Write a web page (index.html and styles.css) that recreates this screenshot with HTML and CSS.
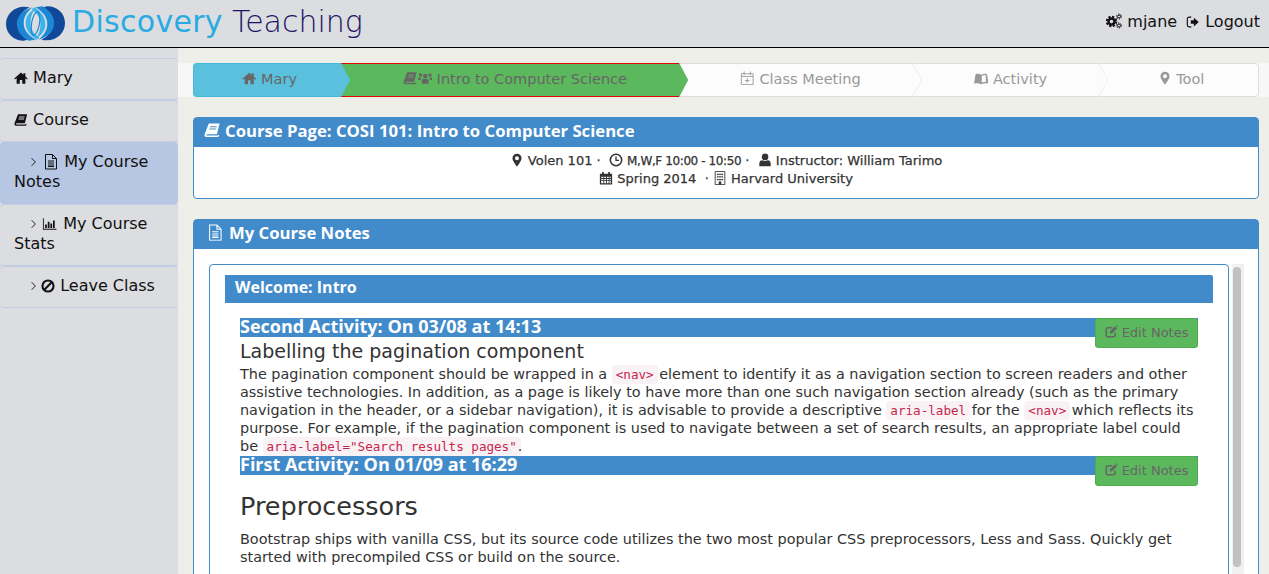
FILE: index.html
```html
<!DOCTYPE html>
<html lang="en">
<head>
    <meta charset="UTF-8">
    <meta name="viewport" content="width=device-width, initial-scale=1.0">
    <title>Discovery Teaching</title>
    <link rel="stylesheet" href="styles.css">
</head>
<body>
    <svg class="icon-defs" aria-hidden="true">
        <symbol id="i-home" viewBox="0 0 16 16"><path d="M8 1.800 .3 8.600l.9 1L3 8v6.500h3.600v-4.200h2.800v4.200H13V8l1.800 1.600.9-1L13 6.200V2.500h-2.200v1.800L8 1.800z"/></symbol>
        <symbol id="i-book" viewBox="0 0 16 16"><path fill-rule="evenodd" d="M4.600 1.500H15l-2.600 10.300H3.300c-1 0-1.300.9-.7 1.200h10.600l.7-.7.700.3-1 1.900H2.300C.7 14.500.2 13 .7 11.500zM6 4h6.200l-.2 1H5.700zM5.300 6.300h6.200l-.2 1H5z"/></symbol>
        <symbol id="i-file" viewBox="0 0 16 16"><path fill="none" stroke="currentColor" d="M2.500 1h7l4 4v10.500h-11zM9.500 1v4h4M5 7.500h6M5 9.500h6M5 11.500h6M5 13h6"/></symbol>
        <symbol id="i-chart" viewBox="0 0 16 16"><path d="M.5 1.500h1v12h14.500v1H.5zM3 8.500h2v4H3zM6 5.500h2v7H6zM9 7.500h2v5H9zM12 4h2v8.500h-2z"/></symbol>
        <symbol id="i-ban" viewBox="0 0 16 16"><circle cx="8" cy="8" r="6.300" fill="none" stroke="currentColor" stroke-width="2.400"/><path d="m3.500 12.500 9-9" stroke="currentColor" stroke-width="2.400"/></symbol>
        <symbol id="i-group" viewBox="0 0 16 16"><circle cx="8" cy="5.500" r="2.600"/><circle cx="2.800" cy="4.500" r="1.900"/><circle cx="13.200" cy="4.500" r="1.900"/><path d="M4.300 14V10.500C4.300 9 5.500 8.500 8 8.500s3.700.5 3.700 2V14zM0 10V8.500C0 7.300 1 7 3.600 7.200 3.200 8 3 9 3 10zM16 10V8.500c0-1.200-1-1.500-3.600-1.300.4.800.6 1.800.6 2.800z"/></symbol>
        <symbol id="i-calplus" viewBox="0 0 16 16"><path fill="none" stroke="currentColor" d="M1.500 3h13v12h-13zM1.500 6h13M4.500 .5v4M11.500 .5v4M8 8v5M5.500 10.500h5"/></symbol>
        <symbol id="i-open" viewBox="0 0 16 16"><path d="M2.500 3c2.200 0 4.300.3 5.500 1.300C9.200 3.300 11.300 3 13.500 3l1 1.500 1.500 9.500c-2.500-.6-5-.6-8 .5-3-1.100-5.500-1.100-8-.5L1.500 4.500zM8.600 5.500v7.300c1.500-.7 3-.9 4.800-.8l-.7-7.500c-1.800 0-3.100.2-4.100 1z" fill-rule="evenodd"/></symbol>
        <symbol id="i-marker" viewBox="0 0 16 16"><path fill-rule="evenodd" d="M8 .8a5.200 5.200 0 0 0-5.200 5.200c0 3.200 5.200 9.500 5.200 9.500s5.200-6.300 5.200-9.500A5.200 5.200 0 0 0 8 .8zm0 3a2.300 2.300 0 1 1 0 4.600 2.300 2.300 0 0 1 0-4.600z"/></symbol>
        <symbol id="i-clock" viewBox="0 0 16 16"><circle cx="8" cy="8" r="6.500" fill="none" stroke="currentColor" stroke-width="1.800"/><path d="M8 4v4.500h3.500" fill="none" stroke="currentColor" stroke-width="1.500"/></symbol>
        <symbol id="i-user" viewBox="0 0 16 16"><circle cx="8" cy="4.500" r="3.800"/><path d="M1.500 15v-3c0-2.500 1.500-3.800 3.500-3.800 1.800 1.200 4.200 1.200 6 0 2 0 3.500 1.300 3.500 3.800v3z"/></symbol>
        <symbol id="i-cal" viewBox="0 0 16 16"><path fill-rule="evenodd" d="M1 3h2.500V1h2v2h5V1h2v2H15v12.500H1zM2.500 6.500v1.500h2.500V6.500zM6 6.500v1.500h2V6.500zM9 6.500v1.500h2V6.500zM12 6.500v1.500h1.500V6.500zM2.500 9v1.500h2.500V9zM6 9v1.500h2V9zM9 9v1.500h2V9zM12 9v1.500h1.500V9zM2.500 11.500v2.500h2.500v-2.500zM6 11.500v2.500h2v-2.500zM9 11.500v2.500h2v-2.500zM12 11.500v2.500h1.500v-2.500z"/></symbol>
        <symbol id="i-building" viewBox="0 0 16 16"><path fill="none" stroke="currentColor" d="M2.500 .5h11v15h-11z"/><path d="M4.500 3h2v1.500h-2zM7 3h2v1.500H7zM9.500 3h2v1.500h-2zM4.500 6h2v1.500h-2zM7 6h2v1.500H7zM9.500 6h2v1.500h-2zM4.500 9h2v1.500h-2zM7 9h2v1.500H7zM9.500 9h2v1.500h-2zM6.500 12h3v3.500h-3z"/></symbol>
        <symbol id="i-gears" viewBox="0 0 16 16"><g fill="none" stroke="currentColor"><circle cx="5.500" cy="8.500" r="3" stroke-width="2.400"/><circle cx="5.500" cy="8.500" r="4.800" stroke-width="2" stroke-dasharray="2.200 1.570"/><circle cx="13" cy="3.500" r="1.500"/><circle cx="13" cy="3.500" r="2.500" stroke-dasharray="1.300 1.320"/><circle cx="13" cy="12.500" r="1.500"/><circle cx="13" cy="12.500" r="2.500" stroke-dasharray="1.300 1.320"/></g></symbol>
        <symbol id="i-signout" viewBox="0 0 16 16"><path d="M6 2.500H3.500A2 2 0 0 0 1.500 4.500v7a2 2 0 0 0 2 2H6" fill="none" stroke="currentColor" stroke-width="1.300"/><path d="M5.500 6H9V3l5.500 5L9 13v-3H5.500z"/></symbol>
        <symbol id="i-edit" viewBox="0 0 16 16"><path fill="none" stroke="currentColor" stroke-width="1.800" d="M12.500 9.500v3a2 2 0 0 1-2 2h-7a2 2 0 0 1-2-2v-7a2 2 0 0 1 2-2H9"/><path d="M6 8l6.500-6.500 2.500 2.500L8.500 10.500H6zM13.500.8l1-.5 1.500 1.500-.5 1z"/></symbol>
        <symbol id="i-chevron" viewBox="0 0 6 16"><path d="M.8 3.500 5.200 8 .8 12.500" fill="none" stroke="currentColor" stroke-width="1.100"/></symbol>
        <symbol id="i-swirl" viewBox="0 0 60 37">
            <path fill="#10499a" d="M24 2C10-1 0 8 0 19c0 10 8 17 18 17l4-1c-8-5-11-11-10-18 1-7 6-12 12-15z"/>
            <path fill="#1c87d4" d="M27 2C17 5 11 11 11 19c0 7 5 13 12 17l7-1c-8-5-12-10-12-17 0-6 3-11 9-16z"/>
            <path fill="#3db4ea" d="M30 3c-7 4-10 9-10 15 0 7 4 12 11 17l3-2c-6-4-9-9-9-15 0-5 1-10 5-15z"/>
        </symbol>
    </svg>

    <header class="topbar">
        <div class="brand">
            <svg class="brand-logo" viewBox="0 0 60 37" aria-hidden="true">
                <use href="#i-swirl"/>
                <use href="#i-swirl" transform="rotate(180 30 18.500)"/>
                <ellipse cx="30" cy="18.500" rx="4" ry="12" fill="none" stroke="#1c87d4" stroke-width="1.200" transform="rotate(10 30 18.500)"/>
            </svg>
            <span class="brand-first">Discovery</span>
            <span class="brand-second">Teaching</span>
        </div>
        <nav class="user-nav">
            <a href="#"><svg class="icon"><use href="#i-gears"/></svg> mjane</a>
            <a href="#"><svg class="icon icon-small"><use href="#i-signout"/></svg> Logout</a>
        </nav>
    </header>

    <div class="layout">
        <aside class="sidebar">
            <a class="side-item" href="#"><svg class="icon"><use href="#i-home"/></svg> Mary</a>
            <a class="side-item" href="#"><svg class="icon"><use href="#i-book"/></svg> Course</a>
            <a class="side-item side-sub active" href="#"><svg class="chev"><use href="#i-chevron"/></svg> <svg class="icon icon-file"><use href="#i-file"/></svg> My Course Notes</a>
            <a class="side-item side-sub" href="#"><svg class="chev"><use href="#i-chevron"/></svg> <svg class="icon icon-chart"><use href="#i-chart"/></svg> My Course Stats</a>
            <a class="side-item side-sub" href="#"><svg class="chev"><use href="#i-chevron"/></svg> <svg class="icon"><use href="#i-ban"/></svg> Leave Class</a>
        </aside>

        <main class="content">
            <div class="wizard-band">
                <div class="wizard">
                    <a class="step step-info" href="#"><svg class="icon"><use href="#i-home"/></svg> Mary</a>
                    <a class="step step-success" href="#"><svg class="icon"><use href="#i-book"/></svg><svg class="icon"><use href="#i-group"/></svg> Intro to Computer Science</a>
                    <a class="step step-class" href="#"><svg class="icon"><use href="#i-calplus"/></svg> Class Meeting</a>
                    <a class="step step-activity" href="#"><svg class="icon"><use href="#i-open"/></svg> Activity</a>
                    <a class="step step-tool" href="#"><svg class="icon icon-small"><use href="#i-marker"/></svg> Tool</a>
                </div>
            </div>

            <section class="panel panel-course">
                <h2 class="panel-title"><svg class="icon"><use href="#i-book"/></svg> Course Page: COSI 101: Intro to Computer Science</h2>
                <div class="course-info">
                    <div><svg class="icon"><use href="#i-marker"/></svg> Volen 101 · &nbsp;<svg class="icon"><use href="#i-clock"/></svg> <span class="course-time">M,W,F 10:00 - 10:50</span> · &nbsp;<svg class="icon"><use href="#i-user"/></svg> Instructor: William Tarimo</div>
                    <div><svg class="icon"><use href="#i-cal"/></svg> Spring 2014 &nbsp;·&nbsp;<svg class="icon"><use href="#i-building"/></svg> Harvard University</div>
                </div>
            </section>

            <section class="panel">
                <h2 class="panel-title"><svg class="icon icon-wide"><use href="#i-file"/></svg> My Course Notes</h2>
                <div class="panel-body">
                    <div class="notes-box">
                        <h3 class="meeting-title">Welcome: Intro</h3>
                        <div class="activity">
                            <a class="btn-edit" href="#"><svg class="icon"><use href="#i-edit"/></svg> Edit Notes</a>
                            <h4 class="activity-title">Second Activity: On 03/08 at 14:13</h4>
                            <h5 class="note-heading">Labelling the pagination component</h5>
                            <p class="note-text">The pagination component should be wrapped in a <code>&lt;nav&gt;</code> element to identify it as a navigation section to screen readers and other<br>
                            assistive technologies. In addition, as a page is likely to have more than one such navigation section already (such as the primary<br>
                            navigation in the header, or a sidebar navigation), it is advisable to provide a descriptive <code>aria-label</code> for the <code>&lt;nav&gt;</code> which reflects its<br>
                            purpose. For example, if the pagination component is used to navigate between a set of search results, an appropriate label could<br>
                            be <code>aria-label="Search results pages"</code>.</p>
                            <a class="btn-edit" href="#"><svg class="icon"><use href="#i-edit"/></svg> Edit Notes</a>
                            <h4 class="activity-title">First Activity: On 01/09 at 16:29</h4>
                            <h2 class="note-big">Preprocessors</h2>
                            <p class="note-text">Bootstrap ships with vanilla CSS, but its source code utilizes the two most popular CSS preprocessors, Less and Sass. Quickly get<br>
                            started with precompiled CSS or build on the source.</p>
                        </div>
                    </div>
                    <div class="scrollbar"><div class="scroll-thumb"></div></div>
                </div>
            </section>
        </main>
    </div>
</body>
</html>
```

FILE: styles.css
```css
html, body {
    height: 100%;
}
body {
    font-family: "DejaVu Sans", sans-serif;
    font-size: 14px;
    line-height: 18px;
    color: #333;
    background-color: #eeefe9;
    margin: 0;
    overflow: hidden;
}
a {
    color: inherit;
    text-decoration: none;
}
.icon-defs {
    display: none;
}
.icon {
    width: 1em;
    height: 1em;
    fill: currentColor;
    vertical-align: -0.1em;
}
.icon-small {
    width: 14px;
    height: 14px;
}
.chev {
    width: 5px;
    height: 16px;
    vertical-align: -3px;
}

.topbar {
    display: flex;
    justify-content: space-between;
    height: 47px;
    padding: 0 9px 0 6px;
    background-color: #dcdde1;
    border-bottom: 1px solid #000;
}
.brand {
    display: flex;
    align-items: flex-start;
    font-size: 30px;
    line-height: 44px;
}
.brand-logo {
    width: 59px;
    height: 37px;
    margin: 5px 7px 0 0;
}
.brand-first {
    color: #29abe2;
    letter-spacing: 0.3px;
    margin-right: 9px;
}
.brand-second {
    color: #1b1464;
    font-weight: 200;
}
.user-nav {
    display: flex;
    gap: 9px;
    font-size: 16px;
    line-height: 44px;
    color: #111;
}

.layout {
    display: flex;
    height: 526px;
}
.sidebar {
    flex: 0 0 178px;
    padding-top: 10px;
    background-color: #dcdde1;
    font-size: 16px;
    line-height: 20px;
    color: #111;
    box-sizing: border-box;
}
.side-item {
    display: block;
    padding: 9px 14px 11px;
    border-top: 1px solid #c2cde4;
    border-bottom: 1px solid #c2cde4;
    border-radius: 4px;
}
.side-item .icon {
    width: 14px;
    height: 14px;
}
.side-item .icon-file {
    width: 16px;
    height: 17px;
    margin-left: 2px;
    vertical-align: -3px;
}
.side-item .icon-chart {
    width: 17px;
}
.side-sub {
    text-indent: 17px;
}
.side-item.active {
    background-color: #b7c6e2;
    border-color: #b7c6e2;
}

.content {
    flex: 1;
    padding-top: 15px;
    min-width: 0;
}
.wizard-band {
    padding: 0 10px 0 15px;
    margin-bottom: 20px;
    background-color: #f7f7f7;
}
.wizard {
    display: flex;
    height: 34px;
    font-size: 14.5px;
    line-height: 30px;
    color: #999;
    background-color: #fcfcfc;
}
.step {
    position: relative;
    box-sizing: border-box;
    padding-left: 10px;
    text-align: center;
    border: 1px solid #ddd;
    border-left: none;
}
.step::before,
.step::after {
    content: "";
    position: absolute;
    top: -1px;
    right: -10px;
    z-index: 1;
    border-left: 9px solid #eee;
    border-top: 17px solid transparent;
    border-bottom: 17px solid transparent;
}
.step::after {
    right: -9px;
    border-left-color: #fcfcfc;
}
.step-info {
    flex: 0 0 148px;
    padding-left: 4px;
    color: #666;
    background-color: #5bc0de;
    border: 1px solid #46b8da;
    border-right: none;
    border-radius: 4px 0 0 4px;
}
.step-info::before {
    right: -9px;
    border-left-color: #46b8da;
}
.step-info::after {
    border-left-color: #5bc0de;
}
.step-success {
    flex: 0 0 338px;
    color: #666;
    background-color: #5cb85c;
    border-color: #e00000 #5cb85c;
    border-width: 1px 0;
}
.step-success::before,
.step-success::after {
    right: -9px;
    border-left-color: #5cb85c;
}
.step-class {
    flex: 0 0 234px;
}
.step-activity {
    flex: 0 0 186px;
}
.step-tool {
    flex: 1;
    padding-left: 5px;
    border-radius: 0 4px 4px 0;
}
.step-tool::before,
.step-tool::after {
    display: none;
}

.panel {
    margin: 0 10px 20px 15px;
    background-color: #fff;
    border: 1px solid #428bca;
    border-radius: 4px;
}
.panel-title {
    margin: 0;
    height: 29px;
    padding: 0 10px;
    font-family: "Open Sans", sans-serif;
    font-size: 16.7px;
    font-weight: 700;
    line-height: 26px;
    color: #fff;
    background-color: #428bca;
}
.icon-wide {
    margin: 0 1px 0 3px;
}
.course-info {
    padding: 5px 0 10px;
    text-align: center;
    font-size: 13px;
    line-height: 18px;
    color: #333;
    -webkit-text-stroke: 0.25px #333;
}
.course-info .icon {
    width: 14px;
    height: 14px;
    vertical-align: -2px;
}
.course-time {
    font-size: 12px;
    letter-spacing: -0.4px;
}
.panel-body {
    display: flex;
    align-items: flex-start;
    gap: 3px;
    padding: 15px 14px 0 15px;
}
.notes-box {
    flex: 1;
    padding: 10px 15px;
    border: 1px solid #428bca;
    border-radius: 4px;
}
.meeting-title {
    margin: 0 0 15px;
    padding: 0 10px;
    height: 28px;
    font-family: "Open Sans", sans-serif;
    font-size: 16px;
    font-weight: 700;
    line-height: 25px;
    color: #fff;
    background-color: #428bca;
    border-radius: 0 2px 0 0;
}
.activity {
    padding: 0 15px;
}
.activity-title {
    margin: 0;
    height: 19px;
    font-family: "Open Sans", sans-serif;
    font-size: 18px;
    font-weight: 700;
    line-height: 17px;
    color: #fff;
    background-color: #428bca;
}
.btn-edit {
    float: right;
    box-sizing: border-box;
    width: 103px;
    height: 30px;
    font-size: 13px;
    line-height: 28px;
    text-align: center;
    color: #666;
    background-color: #5cb85c;
    border: 1px solid #4cae4c;
    border-radius: 3px;
}
.note-heading {
    margin: 4px 0 0;
    font-size: 19px;
    font-weight: 400;
    line-height: 20px;
}
.note-text {
    margin: 4px 0 1px;
    font-size: 14.4px;
    line-height: 18px;
    white-space: nowrap;
}
.note-big {
    margin: 16px 0 9px;
    font-size: 25.5px;
    font-weight: 400;
    line-height: 30px;
}
code {
    padding: 2px 4px;
    margin-right: -3px;
    font-family: "DejaVu Sans Mono", monospace;
    font-size: 12.6px;
    line-height: 1;
    color: #c7254e;
    background-color: #f9f2f4;
    border-radius: 4px;
}
.scrollbar {
    flex: 0 0 12px;
    height: 320px;
    background-color: #f1f1f1;
}
.scroll-thumb {
    width: 8px;
    height: 300px;
    margin: 3px 0 0 1px;
    background-color: #c1c1c1;
    border-radius: 4px;
}
```
